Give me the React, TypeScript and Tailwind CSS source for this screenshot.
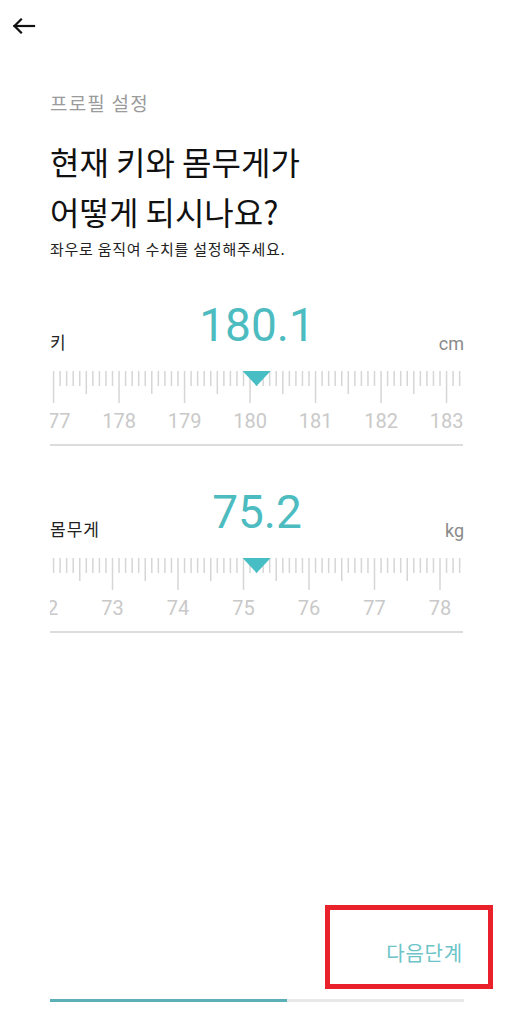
import React from 'react'

const KR = "font-['Noto_Sans_CJK_KR','Noto_Sans',sans-serif]"
const NUM = "font-['Roboto','Noto_Sans_CJK_KR',sans-serif]"

const UNIT = 65.5
const VIEW_W = 414
const POINTER = 206.6

function Ruler({ value, from, to }: { value: number; from: number; to: number }) {
  const ticks: React.ReactNode[] = []
  const labels: React.ReactNode[] = []
  for (let i = from * 10; i <= to * 10; i++) {
    const x = POINTER + (i / 10 - value) * UNIT
    if (x < 1 || x > VIEW_W - 1) continue
    const len = i % 10 === 0 ? 32 : i % 5 === 0 ? 23 : 15
    ticks.push(<line key={i} x1={x} x2={x} y1={0} y2={len} stroke="#d6d6d6" strokeWidth={1.5} />)
  }
  for (let n = from; n <= to; n++) {
    const x = POINTER + (n - value) * UNIT
    // 화면 밖 숫자는 그리지 않음
    if (x < -10 || x > VIEW_W + 10) continue
    labels.push(
      <text key={n} x={x} y={57} textAnchor="middle" fontSize={20} fill="#c9c9c9" fontFamily="Roboto, sans-serif">
        {n}
      </text>
    )
  }

  return (
    <div className="mt-[17px]">
      <svg width={VIEW_W} height={62} className="block overflow-hidden">
        {ticks}
        {labels}
        <polygon points={`${POINTER - 14},0 ${POINTER + 14},0 ${POINTER},15`} fill="#47bec3" />
      </svg>
      <div className="mt-[11px] h-[2px] w-[413px] bg-[#dcdcdc]" />
    </div>
  )
}

function Measure({ label, unit, value, from, to }: { label: string; unit: string; value: number; from: number; to: number }) {
  return (
    <div>
      <div className="grid grid-cols-[1fr_auto_1fr] items-start">
        <span className={`${KR} pt-[30px] text-[17px] leading-[20px] tracking-[1px] text-[#222]`}>{label}</span>
        <span className={`${NUM} text-[46px] leading-[46px] text-[#4dbcc0]`}>{value.toFixed(1)}</span>
        <span className={`${NUM} justify-self-end pt-[32px] text-[18px] leading-[20px] text-[#8a8a8a]`}>{unit}</span>
      </div>
      <Ruler value={value} from={from} to={to} />
    </div>
  )
}

export default function App() {
  return (
    <div className="flex min-h-[1035px] w-[515px] flex-col bg-white">
      {/* 상단 뒤로가기 */}
      <div className="flex h-[52px] items-center pl-[12px]">
        <svg width="24" height="16" viewBox="0 0 24 16" fill="none" stroke="#111" strokeWidth="2.2" strokeLinecap="square">
          <path d="M2.5 8H22" />
          <path d="M9 1.5L2.5 8L9 14.5" />
        </svg>
      </div>

      <div className="pl-[50px] pr-[51px]">
        <p className={`${KR} mt-[39px] text-[19px] leading-[24px] tracking-[1.2px] text-[#9b9b9b]`}>프로필 설정</p>
        <h1 className={`${KR} mt-[21px] text-[32px] leading-[50px] font-normal text-[#111]`}>
          현재 키와 몸무게가
          <br />
          어떻게 되시나요?
        </h1>
        <p className={`${KR} mt-[3px] text-[15px] leading-[20px] tracking-[0.75px] text-[#222]`}>좌우로 움직여 수치를 설정해주세요.</p>

        <div className="mt-[43px]">
          <Measure label="키" unit="cm" value={180.1} from={176} to={185} />
        </div>
        <div className="mt-[43px]">
          <Measure label="몸무게" unit="kg" value={75.2} from={71} to={80} />
        </div>
      </div>

      <div className="flex-1" />

      {/* 하단 버튼 + 진행바 */}
      <div className="flex justify-end pr-[22px]">
        <div className="flex h-[84px] w-[168px] items-start justify-end border-[5px] border-[#e8212b] pt-[31px] pr-[25px]">
          <span className={`${KR} text-[20px] leading-[24px] tracking-[0.8px] text-[#6cc4c8]`}>다음단계</span>
        </div>
      </div>
      <div className="mx-[50px] mt-[10px] mb-[33px] h-[3px] w-[414px] bg-[#e8e8e8]">
        <div className="h-full w-[237px] bg-[#5bb0b7]" />
      </div>
    </div>
  )
}
